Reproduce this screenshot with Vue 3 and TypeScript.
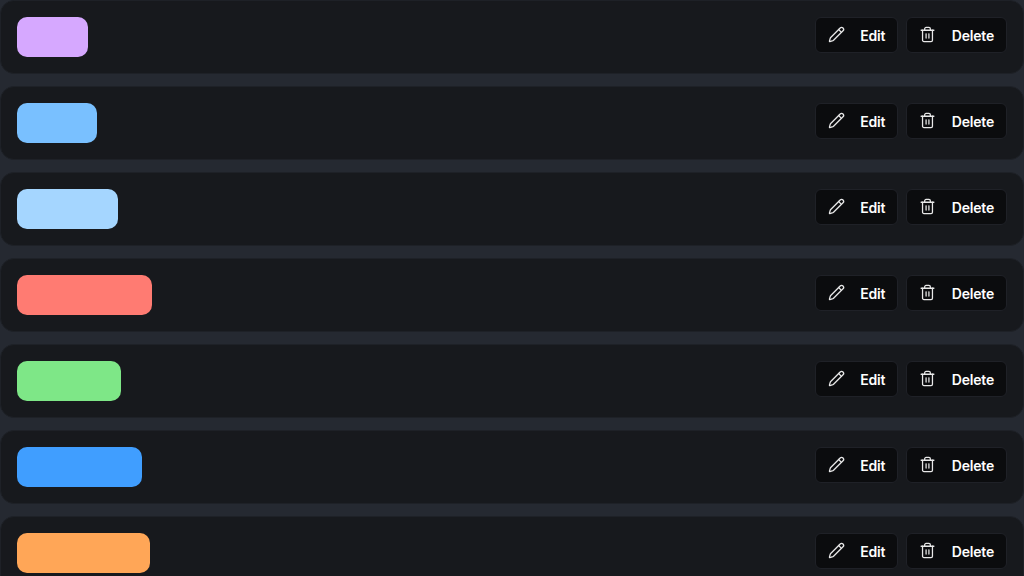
<script setup lang="ts">
const rows: { color: string; width: number }[] = [
  { color: '#d6a8ff', width: 71 },
  { color: '#79c0ff', width: 79.5 },
  { color: '#a5d6ff', width: 100.5 },
  { color: '#ff7b72', width: 135 },
  { color: '#7ee787', width: 104 },
  { color: '#409eff', width: 125 },
  { color: '#ffa657', width: 133 },
]
</script>

<template>
  <div class="list">
    <div v-for="(row, i) in rows" :key="i" class="row">
      <div class="chip" :style="{ background: row.color, width: row.width + 'px' }"></div>
      <div class="actions">
        <button class="btn">
          <svg class="icon" viewBox="0 0 24 24" fill="none" stroke="currentColor" stroke-width="1.8" stroke-linecap="round" stroke-linejoin="round">
            <path d="M21.2 6.8a2.8 2.8 0 0 0-4-4L3.8 16.2a2 2 0 0 0-.5.8l-1.3 4.4a.5.5 0 0 0 .6.6l4.4-1.3a2 2 0 0 0 .8-.5z" />
            <path d="m15 5 4 4" />
          </svg>
          <span>Edit</span>
        </button>
        <button class="btn">
          <svg class="icon" viewBox="0 0 24 24" fill="none" stroke="currentColor" stroke-width="1.8" stroke-linecap="round" stroke-linejoin="round">
            <path d="M3 6h18" />
            <path d="M19 6v14a2 2 0 0 1-2 2H7a2 2 0 0 1-2-2V6" />
            <path d="M8 6V4a2 2 0 0 1 2-2h4a2 2 0 0 1 2 2v2" />
            <path d="M10 11v6" />
            <path d="M14 11v6" />
          </svg>
          <span>Delete</span>
        </button>
      </div>
    </div>
  </div>
</template>

<style>
html, body {
  margin: 0;
  background: #252931;
  overflow: hidden;
}
</style>

<style scoped>
.list {
  display: flex;
  flex-direction: column;
  gap: 12px;
  height: 576px;
  overflow: hidden;
  font-family: Inter, "Liberation Sans", sans-serif;
}
.row {
  flex: none;
  box-sizing: border-box;
  height: 74px;
  display: flex;
  align-items: center;
  justify-content: space-between;
  padding: 16px;
  background: #17191d;
  border: 1px solid #1e2127;
  border-radius: 14px;
}
.chip {
  height: 40px;
  border-radius: 10px;
}
.actions {
  display: flex;
  gap: 8px;
  margin-bottom: 4px;
}
.btn {
  display: flex;
  align-items: center;
  gap: 15.5px;
  height: 36px;
  padding: 0 12px;
  background: #0b0c0e;
  border: 1px solid #1f2127;
  border-radius: 6px;
  color: #fff;
  font: 600 14px Inter, "Liberation Sans", sans-serif;
  letter-spacing: -0.2px;
}
.icon {
  width: 17px;
  height: 17px;
  color: #e8e8e8;
  margin-top: -1px;
}
</style>
